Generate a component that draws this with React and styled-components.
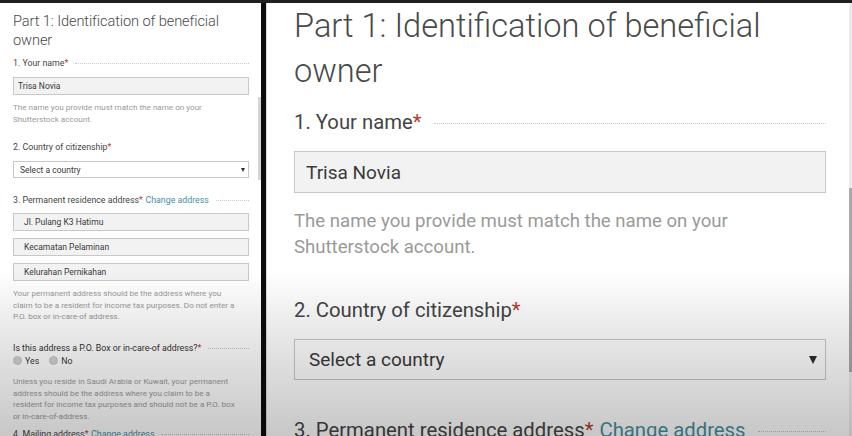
import React from 'react'
import styled, { createGlobalStyle, ThemeProvider, useTheme } from 'styled-components'

// one form, shown twice: the small page on the left and the zoomed copy on the right
const small = {
  padTop: 9, padLeft: 13, padRight: 9,
  head: 14.6, headLh: 18.5, headTrack: -0.1,
  label: 8.8, labelLh: 12, titleGap: 8, fieldGap: 8, stackGap: 7, section: 16, askGap: 19, dotGap: 7, dotDrop: 1,
  field: 8.5, fieldH: 18, inputPad: 4, selectPad: 6, addrPad: 10,
  arrowW: 4, arrowH: 4, arrowRight: 3,
  help: 8.1, helpLh: 11.6, helpGap: 7,
  radio: 9, radioText: 3, radioSpace: 10, radioRow: 1, afterRadio: 9, lastGap: 6,
}

const big = {
  padTop: 1, padLeft: 27, padRight: 23,
  head: 32.6, headLh: 45, headTrack: 0,
  label: 20.3, labelLh: 28, titleGap: 14, fieldGap: 15, stackGap: 16, section: 36, askGap: 40, dotGap: 12, dotDrop: 2,
  field: 19, fieldH: 42, inputPad: 11, selectPad: 14, addrPad: 22,
  arrowW: 9, arrowH: 8, arrowRight: 8,
  help: 18.6, helpLh: 26, helpGap: 15,
  radio: 21, radioText: 7, radioSpace: 22, radioRow: 2, afterRadio: 20, lastGap: 14,
}

const Global = createGlobalStyle`
  html, body {
    margin: 0;
    padding: 0;
    background: #fff;
  }
  body {
    font-family: Roboto, "Liberation Sans", sans-serif;
  }
`

const Screen = styled.div`
  position: relative;
  width: 852px;
  height: 436px;
  overflow: hidden;
  display: flex;
  flex-direction: column;
  background: #fff;
`

const TopStrip = styled.div`
  flex: none;
  height: 3px;
  background: #202020;
`

const Body = styled.div`
  flex: 1;
  min-height: 0;
  display: flex;
`

const Pane = styled.div`
  flex: ${p => (p.$width ? 'none' : '1')};
  width: ${p => (p.$width ? `${p.$width}px` : 'auto')};
  box-sizing: border-box;
  overflow: hidden;
  padding: ${p => `${p.theme.padTop}px ${p.theme.padRight}px 0 ${p.theme.padLeft}px`};
  border-left: ${p => (p.$edge ? '1px solid #dcdcdc' : 'none')};
`

const Scroll = styled.div`
  flex: none;
  width: 3px;
  box-sizing: border-box;
  padding-top: ${p => p.$top}px;
  background: ${p => p.$track};
`

const Thumb = styled.div`
  height: ${p => p.$h}px;
  background: ${p => p.$color};
`

const Divider = styled.div`
  flex: none;
  width: 5px;
  background: #0c0c0c;
`

const Shade = styled.div`
  position: absolute;
  inset: 0;
  pointer-events: none;
  background: linear-gradient(
    to bottom,
    rgba(0, 0, 0, 0) 0%,
    rgba(0, 0, 0, 0) 62%,
    rgba(0, 0, 0, 0.08) 74%,
    rgba(0, 0, 0, 0.22) 100%
  );
`

const Title = styled.h1`
  margin: 0;
  font-weight: 300;
  font-size: ${p => p.theme.head}px;
  line-height: ${p => p.theme.headLh}px;
  letter-spacing: ${p => p.theme.headTrack}px;
  color: #4a4a4a;
  white-space: nowrap;
`

const Label = styled.div`
  display: flex;
  align-items: center;
  margin-top: ${p => p.$gap}px;
  font-size: ${p => p.theme.label}px;
  line-height: ${p => p.theme.labelLh}px;
  color: ${p => (p.$strong ? '#333' : '#454545')};
  white-space: nowrap;
`

const Req = styled.span`
  color: #b4402e;
`

const Link = styled.span`
  margin-left: 0.3em;
  color: #4690a0;
`

const Dots = styled.span`
  flex: 1;
  height: 0;
  margin-left: ${p => p.theme.dotGap}px;
  margin-top: ${p => p.theme.dotDrop}px;
  border-bottom: 1px dotted #c9c9c9;
`

const Input = styled.input`
  display: block;
  box-sizing: border-box;
  width: 100%;
  height: ${p => p.theme.fieldH}px;
  margin: ${p => p.$gap}px 0 0;
  padding: 0 0 0 ${p => p.$pad}px;
  font-family: inherit;
  font-size: ${p => p.theme.field}px;
  color: #3a3a3a;
  background: #f2f2f2;
  border: 1px solid #c8c8c8;
  border-radius: 0;
  outline: none;
`

const Select = styled.div`
  display: flex;
  align-items: center;
  justify-content: space-between;
  box-sizing: border-box;
  height: ${p => p.theme.fieldH - 1}px;
  margin-top: ${p => p.theme.fieldGap}px;
  padding: 0 ${p => p.theme.arrowRight}px 0 ${p => p.theme.selectPad}px;
  font-size: ${p => p.theme.field}px;
  color: #3a3a3a;
  background: #fff;
  border: 1px solid #c8c8c8;
`

const Arrow = styled.span`
  width: 0;
  height: 0;
  border-left: ${p => p.theme.arrowW / 2}px solid transparent;
  border-right: ${p => p.theme.arrowW / 2}px solid transparent;
  border-top: ${p => p.theme.arrowH}px solid #2e2e2e;
`

const Help = styled.p`
  margin: ${p => p.$gap}px 0 0;
  font-size: ${p => p.theme.help}px;
  line-height: ${p => p.theme.helpLh}px;
  color: #9a9a9a;
  white-space: nowrap;
`

const Radios = styled.div`
  display: flex;
  align-items: center;
  margin-top: ${p => p.theme.radioRow}px;
  font-size: ${p => p.theme.label}px;
  line-height: ${p => p.theme.labelLh}px;
  color: #3a3a3a;
`

const Radio = styled.span`
  display: flex;
  align-items: center;
  gap: ${p => p.theme.radioText}px;
  margin-right: ${p => p.theme.radioSpace}px;

  &::before {
    content: '';
    width: ${p => p.theme.radio}px;
    height: ${p => p.theme.radio}px;
    border-radius: 50%;
    background: #d2d2d2;
    border: 1px solid #c4c4c4;
    box-sizing: border-box;
  }
`

function Form() {
  const t = useTheme()

  return (
    <>
      <Title>Part 1: Identification of beneficial<br />owner</Title>

      <Label $gap={t.titleGap}>1. Your name<Req>*</Req><Dots /></Label>
      <Input readOnly defaultValue="Trisa Novia" $gap={t.fieldGap} $pad={t.inputPad} />
      <Help $gap={t.helpGap}>
        The name you provide must match the name on your<br />Shutterstock account.
      </Help>

      <Label $gap={t.section}>2. Country of citizenship<Req>*</Req></Label>
      <Select>Select a country<Arrow /></Select>

      <Label $gap={t.section}>
        3. Permanent residence address<Req>*</Req><Link>Change address</Link><Dots />
      </Label>
      <Input readOnly defaultValue="Jl. Pulang K3 Hatimu" $gap={t.stackGap} $pad={t.addrPad} />
      <Input readOnly defaultValue="Kecamatan Pelaminan" $gap={t.stackGap} $pad={t.addrPad} />
      <Input readOnly defaultValue="Kelurahan Pernikahan" $gap={t.stackGap} $pad={t.addrPad} />
      <Help $gap={t.helpGap}>
        Your permanent address should be the address where you<br />
        claim to be a resident for income tax purposes. Do not enter a<br />
        P.O. box or in-care-of address.
      </Help>

      <Label $gap={t.askGap} $strong>
        Is this address a P.O. Box or in-care-of address?<Req>*</Req><Dots />
      </Label>
      <Radios>
        <Radio>Yes</Radio>
        <Radio>No</Radio>
      </Radios>
      <Help $gap={t.afterRadio}>
        Unless you reside in Saudi Arabia or Kuwait, your permanent<br />
        address should be the address where you claim to be a<br />
        resident for income tax purposes and should not be a P.O. box<br />
        or in-care-of-address.
      </Help>

      <Label $gap={t.lastGap}>
        4. Mailing address<Req>*</Req><Link>Change address</Link><Dots />
      </Label>
    </>
  )
}

export default function App() {
  return (
    <Screen>
      <Global />
      <TopStrip />
      <Body>
        <ThemeProvider theme={small}>
          <Pane $width={258}>
            <Form />
          </Pane>
        </ThemeProvider>
        <Scroll $top={94} $track="#fff">
          <Thumb $h={83} $color="#d4d4d4" />
        </Scroll>
        <Divider />
        <ThemeProvider theme={big}>
          <Pane $edge>
            <Form />
          </Pane>
        </ThemeProvider>
        <Scroll $top={185} $track="#ececec">
          <Thumb $h={184} $color="#a9a9a9" />
        </Scroll>
      </Body>
      <Shade />
    </Screen>
  )
}
